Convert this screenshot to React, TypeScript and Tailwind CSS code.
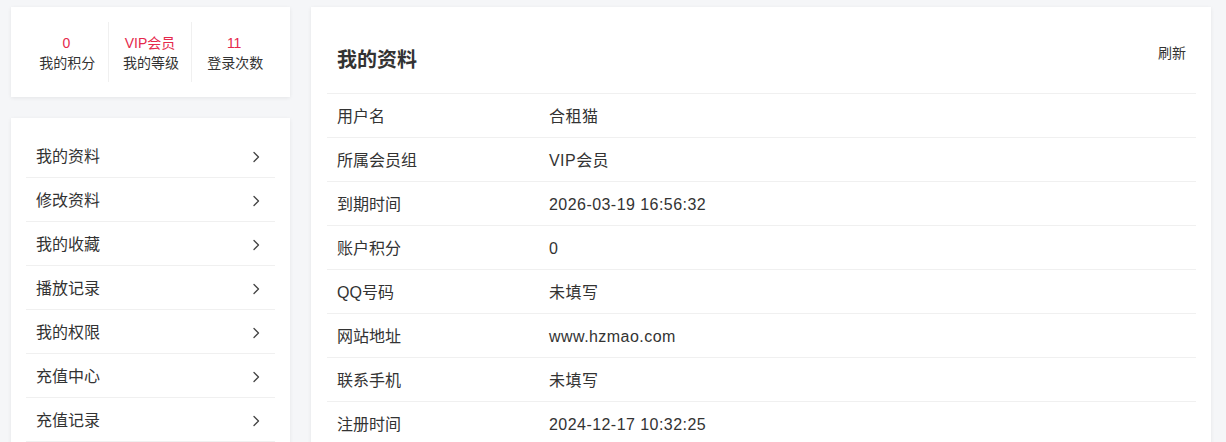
import React from "react";

const font = { fontFamily: '"Liberation Sans", "Noto Sans CJK SC", sans-serif' };

const stats = [
  { v: "0", l: "我的积分" },
  { v: "VIP会员", l: "我的等级" },
  { v: "11", l: "登录次数" },
];

const menu = ["我的资料", "修改资料", "我的收藏", "播放记录", "我的权限", "充值中心", "充值记录"];

const rows: [string, string][] = [
  ["用户名", "合租猫"],
  ["所属会员组", "VIP会员"],
  ["到期时间", "2026-03-19 16:56:32"],
  ["账户积分", "0"],
  ["QQ号码", "未填写"],
  ["网站地址", "www.hzmao.com"],
  ["联系手机", "未填写"],
  ["注册时间", "2024-12-17 10:32:25"],
];

function Chevron() {
  return (
    <svg width="8" height="12" viewBox="0 0 8 12" fill="none">
      <path d="M2 1.5 L6.5 6 L2 10.5" stroke="#444" strokeWidth="1.3" strokeLinecap="round" strokeLinejoin="round" />
    </svg>
  );
}

export default function App() {
  return (
    <div className="w-[1226px] h-[442px] overflow-hidden bg-[#f5f6f8] text-[#333]" style={font}>
      <div className="flex gap-[21px] pl-[11px] pt-[7px]">
        <div className="w-[279px] shrink-0 flex flex-col gap-[21px]">
          <div className="bg-white h-[90px] px-[14px] py-[15px] grid grid-cols-3 shadow-[0_1px_4px_rgba(0,0,0,0.07)]">
            {stats.map((s, i) => (
              <div
                key={i}
                className={`flex flex-col items-center justify-center pt-[1px] ${i < 2 ? "border-r border-[#f0f0f0]" : ""}`}
              >
                <div className="text-[14px] leading-[20px] text-[#e5294c]">{s.v}</div>
                <div className="text-[14px] leading-[20px] text-[#333] pl-[2px]">{s.l}</div>
              </div>
            ))}
          </div>
          <div className="bg-white pt-[16px] px-[15px] shadow-[0_1px_4px_rgba(0,0,0,0.07)] h-[400px]">
            {menu.map((m) => (
              <div
                key={m}
                className="h-[44px] border-b border-[#f0f0f0] flex items-center justify-between pl-[10px] pr-[15px] pt-[3px] text-[16px]"
              >
                <span>{m}</span>
                <Chevron />
              </div>
            ))}
          </div>
        </div>
        <div className="w-[900px] shrink-0 bg-white pt-[16px] pl-[16px] pr-[15px] shadow-[0_1px_4px_rgba(0,0,0,0.07)] h-[500px]">
          <div className="h-[71px] border-b border-[#f0f0f0] flex items-center justify-between pl-[10px] pr-[10px] pt-[3px]">
            <span className="text-[20px] font-bold">我的资料</span>
            <span className="text-[14px] mb-[12px]">刷新</span>
          </div>
          {rows.map(([k, v]) => (
            <div key={k} className="h-[44px] border-b border-[#f0f0f0] flex items-center pl-[10px] pt-[3px] text-[16px]">
              <span className="w-[212px] shrink-0">{k}</span>
              <span className="tracking-[0.45px]">{v}</span>
            </div>
          ))}
        </div>
      </div>
    </div>
  );
}
